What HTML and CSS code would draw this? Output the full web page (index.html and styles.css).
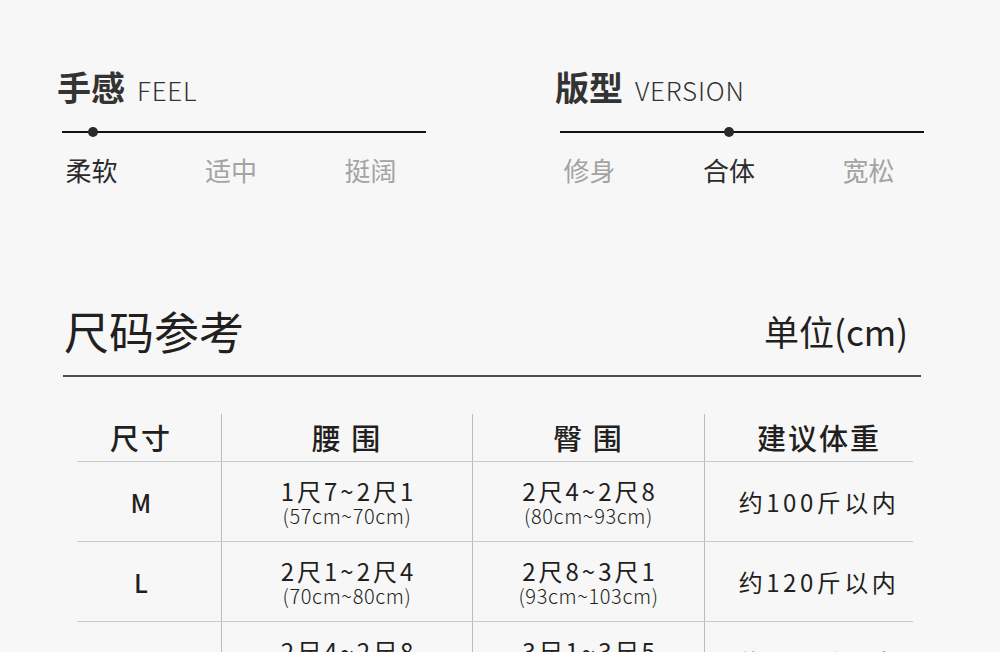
FILE: index.html
```html
<!DOCTYPE html>
<html lang="zh-CN">
<head>
<meta charset="utf-8">
<title>尺码参考</title>
<link rel="stylesheet" href="styles.css">
</head>
<body>
<div class="page">
  <section class="traits">
    <div class="trait">
      <h2 class="trait-title">手感<span class="trait-en">FEEL</span></h2>
      <div class="track"><span class="dot dot-feel"></span></div>
      <div class="options">
        <span class="opt active">柔软</span>
        <span class="opt">适中</span>
        <span class="opt">挺阔</span>
      </div>
    </div>
    <div class="trait">
      <h2 class="trait-title">版型<span class="trait-en">VERSION</span></h2>
      <div class="track"><span class="dot dot-version"></span></div>
      <div class="options">
        <span class="opt">修身</span>
        <span class="opt active">合体</span>
        <span class="opt">宽松</span>
      </div>
    </div>
  </section>

  <section class="size">
    <div class="size-head">
      <h1 class="size-title">尺码参考</h1>
      <span class="size-unit">单位(cm)</span>
    </div>
    <div class="table">
      <div class="cell th c1">尺寸</div>
      <div class="cell th">腰 围</div>
      <div class="cell th">臀 围</div>
      <div class="cell th c4">建议体重</div>

      <div class="cell c1"><span class="sz">M</span></div>
      <div class="cell"><span class="main">1尺7~2尺1</span><span class="sub">(57cm~70cm)</span></div>
      <div class="cell"><span class="main">2尺4~2尺8</span><span class="sub">(80cm~93cm)</span></div>
      <div class="cell c4"><span class="wt">约100斤以内</span></div>

      <div class="cell c1"><span class="sz">L</span></div>
      <div class="cell"><span class="main">2尺1~2尺4</span><span class="sub">(70cm~80cm)</span></div>
      <div class="cell"><span class="main">2尺8~3尺1</span><span class="sub">(93cm~103cm)</span></div>
      <div class="cell c4"><span class="wt">约120斤以内</span></div>

      <div class="cell c1"><span class="sz">XL</span></div>
      <div class="cell"><span class="main">2尺4~2尺8</span><span class="sub">(80cm~93cm)</span></div>
      <div class="cell"><span class="main">3尺1~3尺5</span><span class="sub">(103cm~117cm)</span></div>
      <div class="cell c4"><span class="wt">约140斤以内</span></div>
    </div>
  </section>
</div>
</body>
</html>
```

FILE: styles.css
```css
* { box-sizing: border-box; margin: 0; padding: 0; }

html, body {
  background: #f7f7f7;
}

body {
  font-family: "Noto Sans CJK SC", "Noto Sans", sans-serif;
  color: #231f20;
  height: 652px;
  overflow: hidden;
}

.page {
  padding-top: 66px;
}

.traits {
  display: flex;
  padding-left: 57px;
  gap: 127px;
}

.trait {
  width: 371px;
}

.trait-title {
  font-size: 34px;
  font-weight: 700;
  line-height: 42px;
  color: #333;
  display: flex;
  align-items: baseline;
}

.trait-en {
  font-size: 26px;
  font-weight: 300;
  margin-left: 12px;
  color: #333;
  letter-spacing: 0.8px;
}

.track {
  position: relative;
  margin: 20px 0 0 5px;
  width: 364px;
  height: 2px;
  background: #111;
}

.dot {
  position: absolute;
  top: -4px;
  width: 10px;
  height: 10px;
  border-radius: 50%;
  background: #2a2a2a;
}

.dot-feel { left: 26px; }
.dot-version { left: 164px; }

.options {
  display: flex;
  gap: 87.5px;
  margin: 20px 0 0 8.5px;
}

.opt {
  font-size: 26px;
  line-height: 34px;
  width: 52px;
  color: #a3a3a3;
}

.opt.active {
  color: #2b2b2b;
}

.size {
  margin-top: 114px;
}

.size-head {
  display: flex;
  justify-content: space-between;
  align-items: flex-start;
  margin: 0 79px 0 63px;
  padding: 0 13px 0 1px;
  border-bottom: 2px solid #4f4b4a;
  height: 76px;
}

.size-title {
  font-size: 45px;
  font-weight: 400;
  line-height: 60px;
  color: #231f20;
}

.size-unit {
  font-size: 35px;
  line-height: 48px;
  padding-top: 6px;
  color: #231f20;
}

.table {
  display: grid;
  grid-template-columns: 144px 251px 232px 209px;
  grid-template-rows: 48px repeat(3, 80px);
  margin: 37px 0 0 77px;
  width: 836px;
}

.cell {
  display: flex;
  flex-direction: column;
  align-items: center;
  justify-content: center;
  border-left: 1px solid #bcbcbc;
  border-bottom: 1px solid #c9c9c9;
  color: #231f20;
}

.cell.c1 {
  border-left: none;
  padding-right: 16px;
}

.cell.c4 {
  padding-left: 20px;
}

.cell.th {
  font-size: 29px;
  font-weight: 500;
  letter-spacing: 2px;
  padding-bottom: 2px;
}

.sz {
  font-size: 25px;
  font-weight: 500;
}

.main {
  font-size: 24px;
  line-height: 28px;
  letter-spacing: 3px;
  margin-right: -3px;
}

.sub {
  font-size: 20px;
  line-height: 22px;
  font-weight: 300;
  letter-spacing: 0.6px;
}

.wt {
  font-size: 24px;
  letter-spacing: 3.5px;
}
```
